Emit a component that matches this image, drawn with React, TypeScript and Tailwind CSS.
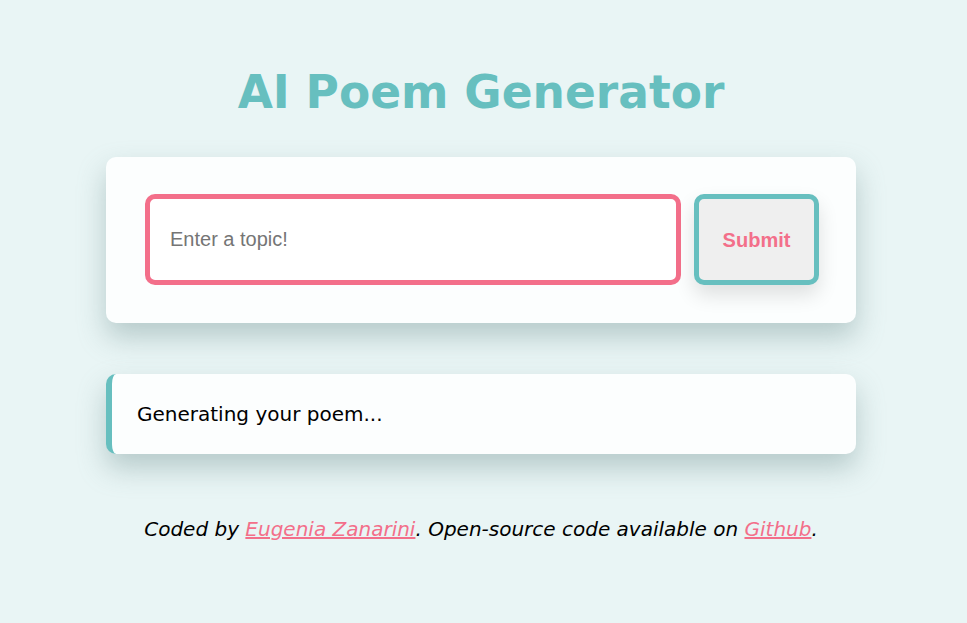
import React from "react";

export default function App() {
  return (
    <div className="min-h-[623px] bg-[#e9f5f5] pr-[5px] font-['DejaVu_Sans',sans-serif]">
      <div className="mx-auto w-[750px] pt-[63px]">
        <h1 className="text-center text-[45.5px] font-bold leading-[60px] text-[#67bfbf]">
          AI Poem Generator
        </h1>
        <form
          className="mt-[34px] flex gap-[13px] rounded-[10px] bg-[#fcfefe] pb-[38px] pl-[39px] pr-[37px] pt-[37px] shadow-[0_14px_28px_rgba(120,150,150,0.45)]"
          onSubmit={(e) => e.preventDefault()}
        >
          <input
            type="text"
            placeholder="Enter a topic!"
            className="h-[91px] min-w-0 flex-1 rounded-[10px] border-[5px] border-[#f36f8a] bg-white px-[20px] font-['Liberation_Sans',Arial,sans-serif] text-[20px] text-black outline-none placeholder:text-[#757575]"
          />
          <button
            type="submit"
            className="h-[91px] w-[125px] shrink-0 rounded-[10px] border-[5px] border-[#67bfbf] bg-[#efefef] font-['Liberation_Sans',Arial,sans-serif] text-[20px] font-bold text-[#f36f8a] shadow-[0_10px_20px_rgba(0,0,0,0.12)]"
          >
            Submit
          </button>
        </form>
        <div className="mt-[51px] flex h-[80px] items-center rounded-[10px] border-l-[6px] border-[#67bfbf] bg-[#fcfefe] pl-[25px] text-[20px] text-black shadow-[0_14px_28px_rgba(120,150,150,0.45)]">
          Generating your poem...
        </div>
        <footer className="mt-[60px] text-center text-[20px] italic text-black">
          Coded by{" "}
          <a href="#" className="text-[#f36f8a] underline">
            Eugenia Zanarini
          </a>
          . Open-source code available on{" "}
          <a href="#" className="text-[#f36f8a] underline">
            Github
          </a>
          .
        </footer>
      </div>
    </div>
  );
}
